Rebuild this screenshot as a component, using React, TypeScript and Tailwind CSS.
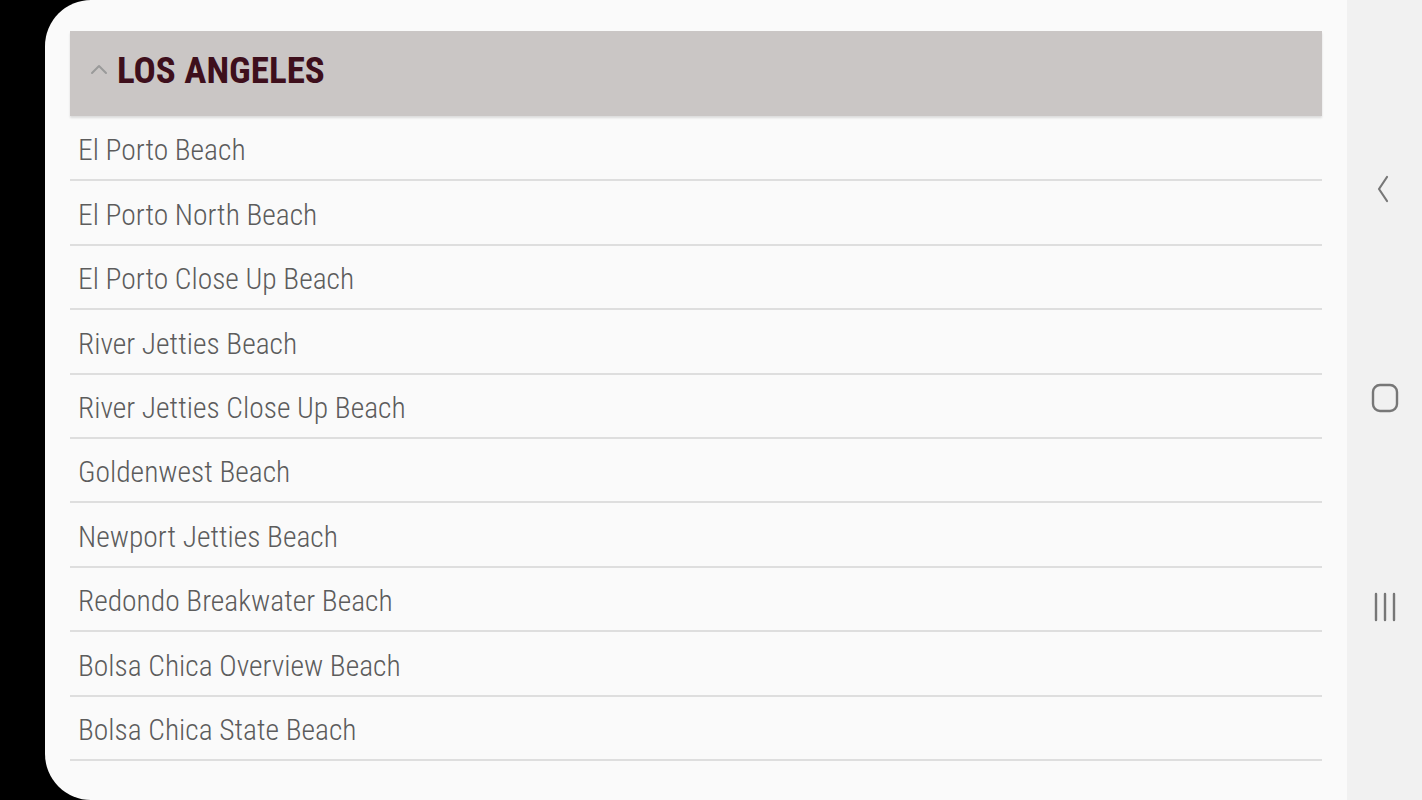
import React from "react";

const beaches = [
  "El Porto Beach",
  "El Porto North Beach",
  "El Porto Close Up Beach",
  "River Jetties Beach",
  "River Jetties Close Up Beach",
  "Goldenwest Beach",
  "Newport Jetties Beach",
  "Redondo Breakwater Beach",
  "Bolsa Chica Overview Beach",
  "Bolsa Chica State Beach",
];

const NavBar: React.FC = () => (
  <div className="w-[75px] h-full bg-[#f1f1f1] flex flex-col items-center justify-between pt-[172px] pb-[176px] text-[#777]">
    <svg width="18" height="34" viewBox="0 0 18 34" fill="none" className="mr-[3px]">
      <path d="M13 5 L5 17 L13 29" stroke="#777" strokeWidth="2.2" strokeLinecap="round" strokeLinejoin="round" />
    </svg>
    <svg width="28" height="32" viewBox="0 0 28 32" fill="none">
      <rect x="2" y="3" width="24" height="26" rx="7" stroke="#777" strokeWidth="2.4" />
    </svg>
    <svg width="28" height="34" viewBox="0 0 28 34" fill="none">
      <path d="M5 4 V30 M14 4 V30 M23 4 V30" stroke="#777" strokeWidth="2.4" strokeLinecap="round" />
    </svg>
  </div>
);

const BeachRow: React.FC<{ name: string }> = ({ name }) => (
  <div className="h-[64.4px] border-b-2 border-[#dedede] flex items-center pl-2 pt-[6px]">
    <span className="text-[29.5px] text-[#5c5c5c] font-stretch-condensed font-light leading-none">
      {name}
    </span>
  </div>
);

export default function App() {
  return (
    <div
      className="w-[1422px] h-[800px] bg-black flex overflow-hidden"
      style={{ fontFamily: "Roboto, 'Liberation Sans', sans-serif" }}
    >
      <div className="w-[45px] shrink-0" />
      <div className="flex-1 h-full bg-[#fafafa] rounded-l-[46px] pl-[25px] pr-[25px] pt-[31px]">
        {/* Header */}
        <div className="h-[85px] bg-[#cac6c5] shadow-[0_2px_2px_rgba(0,0,0,0.12)] flex items-center pl-[20px]">
          <svg width="18" height="12" viewBox="0 0 18 12" fill="none" className="mb-[10px] mr-[9px]">
            <path d="M2 10 L9 3 L16 10" stroke="#9a9a9a" strokeWidth="2" strokeLinecap="round" strokeLinejoin="round" />
          </svg>
          <span className="text-[37px] font-bold text-[#3e0f1c] font-stretch-condensed leading-none mt-[-6px]">
            LOS ANGELES
          </span>
        </div>
        {/* Beach list */}
        <div className="pt-px">
          {beaches.map((b) => (
            <BeachRow key={b} name={b} />
          ))}
        </div>
      </div>
      <NavBar />
    </div>
  );
}
